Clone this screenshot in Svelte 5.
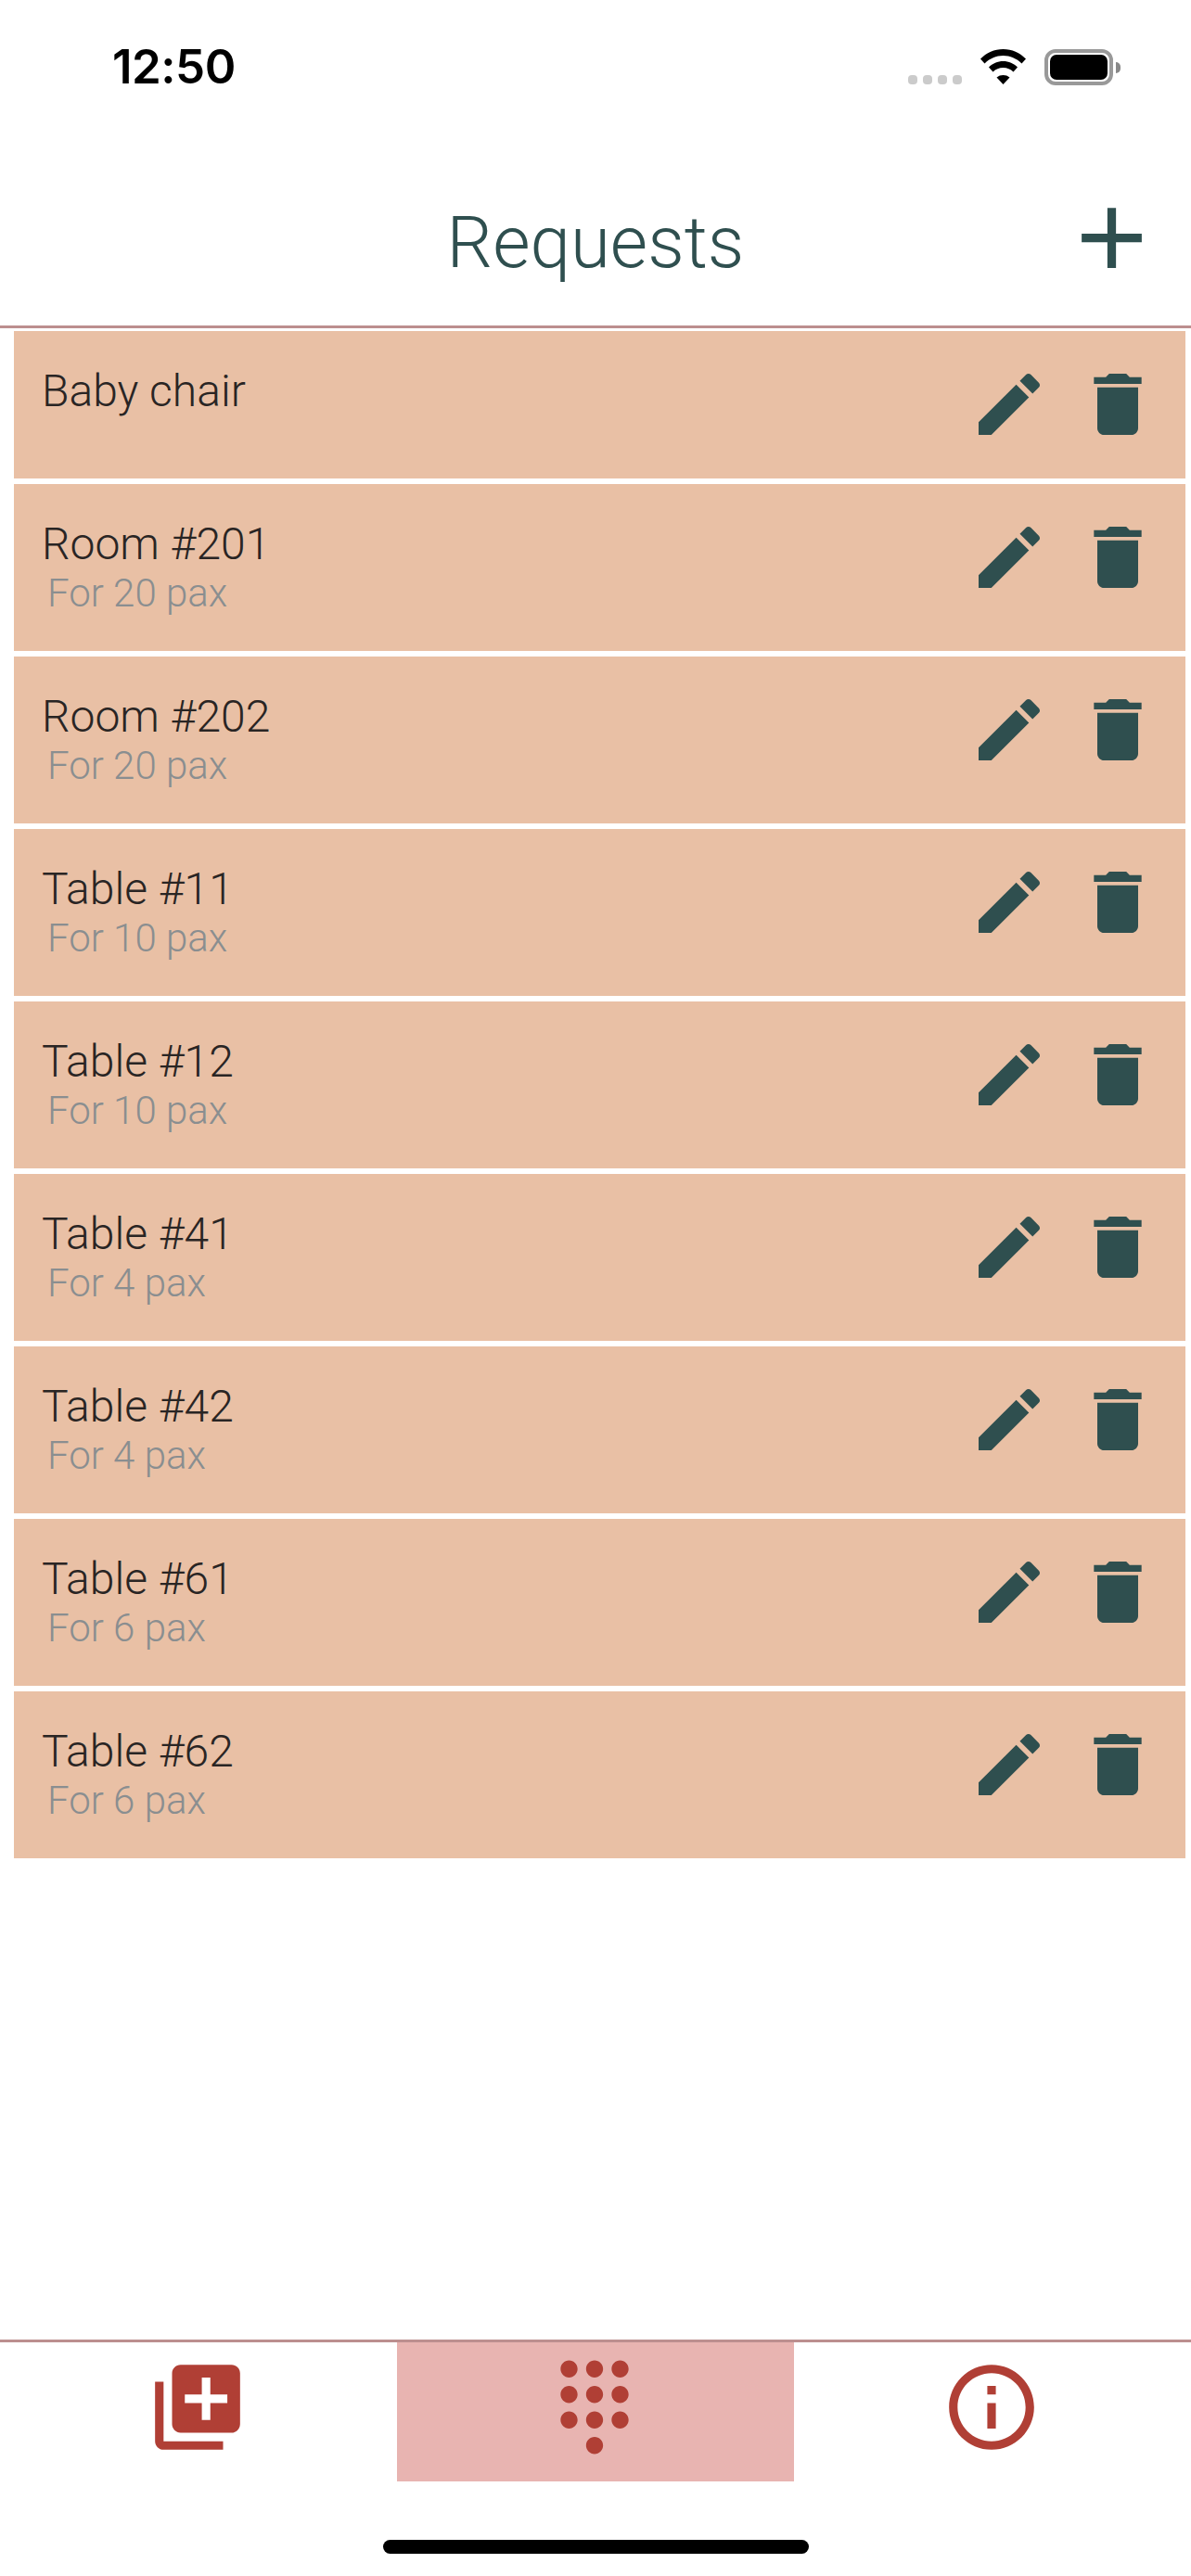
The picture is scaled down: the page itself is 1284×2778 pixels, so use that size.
<script>
  const rows = [
    { title: 'Baby chair', sub: '' },
    { title: 'Room #201', sub: 'For 20 pax' },
    { title: 'Room #202', sub: 'For 20 pax' },
    { title: 'Table #11', sub: 'For 10 pax' },
    { title: 'Table #12', sub: 'For 10 pax' },
    { title: 'Table #41', sub: 'For 4 pax' },
    { title: 'Table #42', sub: 'For 4 pax' },
    { title: 'Table #61', sub: 'For 6 pax' },
    { title: 'Table #62', sub: 'For 6 pax' }
  ];
  const edit = 'M3 17.25V21h3.75L17.81 9.94l-3.75-3.75L3 17.25zM20.71 7.04c.39-.39.39-1.02 0-1.41l-2.34-2.34c-.39-.39-1.02-.39-1.41 0l-1.83 1.83 3.75 3.75 1.83-1.83z';
  const del = 'M6 19c0 1.1.9 2 2 2h8c1.1 0 2-.9 2-2V7H6v12zM19 4h-3.5l-1-1h-5l-1 1H5v2h14V4z';
</script>

<div class="page">
  <div class="status">
    <span class="time">12:50</span>
    <div class="indicators">
      <div class="dots"><i></i><i></i><i></i><i></i></div>
      <svg class="wifi" viewBox="0 0 49 38">
        <path d="M0 14.500C6.500 8 15 4 24.500 4S42.500 8 49 14.500L44.500 19.500C39 14 32 11 24.500 11S10 14 4.500 19.500Z" transform="translate(0 -4)" />
        <path d="M9 22.500C13 18.500 18.500 16 24.500 16S36 18.500 40 22.500L35.500 27.500C32.500 24.500 28.800 23 24.500 23S16.500 24.500 13.500 27.500Z" transform="translate(0 -3)" />
        <path d="M17.500 30.500C19.500 28.800 22 28 24.500 28S29.500 28.800 31.500 30.500L24.500 38Z" />
      </svg>
      <div class="battery"><div class="fill"></div></div>
      <div class="nub"></div>
    </div>
  </div>

  <header class="head">
    <h1>Requests</h1>
    <svg class="add" viewBox="0 0 24 24"><path d="M19 13h-6v6h-2v-6H5v-2h6V5h2v6h6v2z" /></svg>
  </header>

  <main class="list">
    {#each rows as r}
      <div class="row" class:single={!r.sub}>
        <div class="txt">
          <div class="title">{r.title}</div>
          {#if r.sub}<div class="sub">{r.sub}</div>{/if}
        </div>
        <svg class="ico" viewBox="0 0 24 24"><path d={edit} /></svg>
        <svg class="ico" viewBox="0 0 24 24"><path d={del} /></svg>
      </div>
    {/each}
  </main>

  <nav class="tabs">
    <div class="tab">
      <svg viewBox="0 0 24 24"><path d="M4 6H2v14c0 1.100.9 2 2 2h14v-2H4V6zm16-4H8c-1.100 0-2 .9-2 2v12c0 1.100.9 2 2 2h12c1.100 0 2-.9 2-2V4c0-1.100-.9-2-2-2zm-1 9h-4v4h-2v-4H9V9h4V5h2v4h4v2z" /></svg>
    </div>
    <div class="tab active">
      <svg viewBox="0 0 24 24"><path d="M12 19c-1.100 0-2 .9-2 2s.9 2 2 2 2-.9 2-2-.9-2-2-2zM6 1c-1.100 0-2 .9-2 2s.9 2 2 2 2-.9 2-2-.9-2-2-2zm0 6c-1.100 0-2 .9-2 2s.9 2 2 2 2-.9 2-2-.9-2-2-2zm0 6c-1.100 0-2 .9-2 2s.9 2 2 2 2-.9 2-2-.9-2-2-2zm12-8c1.100 0 2-.9 2-2s-.9-2-2-2-2 .9-2 2 .9 2 2 2zm-6 8c-1.100 0-2 .9-2 2s.9 2 2 2 2-.9 2-2-.9-2-2-2zm6 0c-1.100 0-2 .9-2 2s.9 2 2 2 2-.9 2-2-.9-2-2-2zm0-6c-1.100 0-2 .9-2 2s.9 2 2 2 2-.9 2-2-.9-2-2-2zm-6 0c-1.100 0-2 .9-2 2s.9 2 2 2 2-.9 2-2-.9-2-2-2zm0-6c-1.100 0-2 .9-2 2s.9 2 2 2 2-.9 2-2-.9-2-2-2z" /></svg>
    </div>
    <div class="tab">
      <svg viewBox="0 0 24 24"><path d="M11 17h2v-6h-2v6zm1-15C6.480 2 2 6.480 2 12s4.480 10 10 10 10-4.480 10-10S17.520 2 12 2zm0 18c-4.410 0-8-3.590-8-8s3.590-8 8-8 8 3.590 8 8-3.590 8-8 8zM11 9h2V7h-2v2z" /></svg>
    </div>
  </nav>

  <div class="home-wrap"><div class="home"></div></div>
</div>

<style>
  :global(body) { margin: 0; background: #fff; }
  .page {
    width: 1284px;
    height: 2778px;
    display: flex;
    flex-direction: column;
    font-family: Roboto, sans-serif;
    overflow: hidden;
  }
  .status {
    height: 130px;
    flex: none;
    box-sizing: border-box;
    padding: 0 76px 0 121px;
    display: flex;
    justify-content: space-between;
    align-items: flex-start;
  }
  .time {
    margin-top: 43px;
    font: 600 51px/58px Inter, sans-serif;
    color: #000;
    letter-spacing: -0.5px;
  }
  .indicators { display: flex; align-items: flex-start; margin-top: 53px; }
  .dots { display: flex; gap: 6px; margin-top: 28px; margin-right: 20px; }
  .dots i { width: 10px; height: 10px; border-radius: 4px; background: #cbcbcb; display: block; }
  .wifi { width: 49px; height: 38px; fill: #000; margin-right: 20px; }
  .battery {
    width: 74px; height: 39px; box-sizing: border-box;
    border: 4px solid #999; border-radius: 12px; padding: 2px;
  }
  .fill { width: 100%; height: 100%; background: #000; border-radius: 7px; }
  .nub { width: 5px; height: 12px; margin-top: 14px; margin-left: 3px; background: #888; border-radius: 0 6px 6px 0; }

  .head {
    height: 224px;
    flex: none;
    box-sizing: border-box;
    border-bottom: 3px solid #bc8f8f;
    position: relative;
    display: flex;
    justify-content: center;
  }
  h1 {
    margin: 86px 0 0;
    font-weight: 300;
    font-size: 78px;
    line-height: 92px;
    color: #2f4f4f;
  }
  .add { position: absolute; left: 1143px; top: 71px; width: 111px; height: 111px; fill: #2f4f4f; }

  .list {
    flex: 1;
    padding: 3px 6px 0 15px;
    display: flex;
    flex-direction: column;
    gap: 6px;
  }
  .row {
    height: 180px;
    background: #e9c0a5;
    display: flex;
    align-items: flex-start;
    box-sizing: border-box;
    padding: 35px 29px 0 30px;
    gap: 29px;
  }
  .row.single { height: 159px; }
  .txt { flex: 1; }
  .title { font-weight: 300; font-size: 48px; line-height: 56px; color: #292524; margin-top: 2px; }
  .sub { font-weight: 300; font-size: 42px; line-height: 50px; color: #8a8e90; margin-left: 6px; }
  .ico { width: 88px; height: 88px; fill: #2f4f4f; flex: none; }

  .tabs {
    flex: none;
    height: 153px;
    box-sizing: border-box;
    border-top: 3px solid #bc8f8f;
    display: grid;
    grid-template-columns: 428px 428px 428px;
  }
  .tab { display: flex; justify-content: center; padding-top: 15px; box-sizing: border-box; }
  .tab.active { background: #e8b4b1; }
  .tab svg { width: 110px; height: 110px; fill: #b03f35; margin-right: 2px; }
  .home-wrap { flex: none; height: 102px; display: flex; justify-content: center; padding-top: 63px; box-sizing: border-box; }
  .home { width: 459px; height: 15px; border-radius: 8px; background: #000; }
</style>
